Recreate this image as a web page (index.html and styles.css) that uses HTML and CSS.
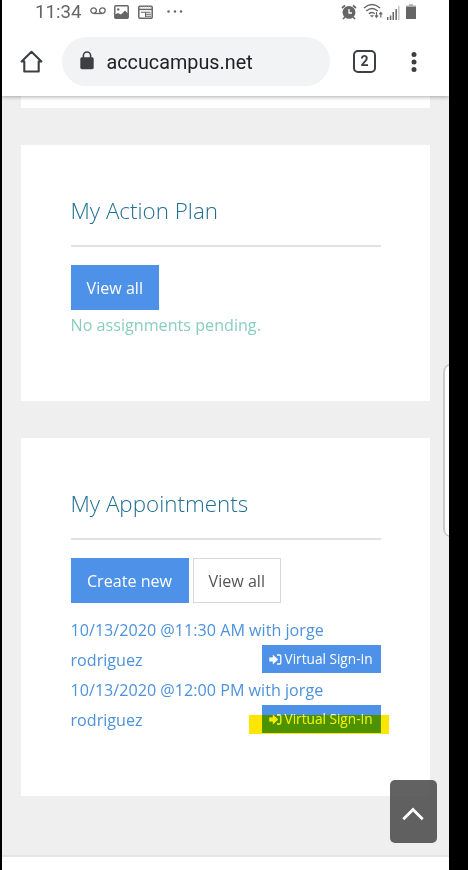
FILE: index.html
```html
<!DOCTYPE html>
<html lang="en">
<head>
<meta charset="utf-8">
<title>accucampus.net</title>
<link rel="stylesheet" href="styles.css">
</head>
<body>
<div class="phone">
  <header class="browser">
    <div class="status">
      <span class="clock">11:34</span>
      <svg class="voicemail" width="16" height="8" viewBox="0 0 16 8" fill="none" stroke="#666" stroke-width="1.3"><circle cx="3.6" cy="3.6" r="2.8"/><circle cx="12.4" cy="3.6" r="2.8"/><path d="M3.6 6.5h8.8"/></svg>
      <svg class="picture" width="15" height="14" viewBox="0 0 15 14"><rect x=".8" y=".8" width="13.4" height="12.4" rx="1" fill="#fff" stroke="#666" stroke-width="1.5"/><path d="M1 9.5l3-1.5 3 1.5 4-4 3 3V13H1z" fill="#666"/><circle cx="4.2" cy="4.4" r="1.2" fill="#666"/></svg>
      <svg class="news" width="15" height="14" viewBox="0 0 15 14" fill="none" stroke="#666"><rect x=".8" y="1.2" width="13.4" height="12" rx="1" stroke-width="1.5"/><path d="M1 4.4h13" stroke-width="1.4"/><path d="M2 2.2h11" stroke="#ccc" stroke-width="1" stroke-dasharray="1 1"/><path d="M3 7.3h9.5M8 9.3h5M8 11.2h5M7.5 7v5" stroke-width="1.1"/></svg>
      <svg class="more" width="16" height="3" viewBox="0 0 16 3" fill="#666"><circle cx="1.5" cy="1.5" r="1.2"/><circle cx="8" cy="1.5" r="1.2"/><circle cx="14" cy="1.5" r="1.2"/></svg>
      <svg class="alarm" width="16" height="16" viewBox="0 0 16 16"><circle cx="8" cy="8.4" r="6.4" fill="#666"/><path d="M1 4L4 1.3M15 4l-3-2.7M4 13l-2 2M12 13l2 2" stroke="#666" stroke-width="1.7"/><path d="M8 5v4h3" fill="none" stroke="#fff" stroke-width="1.3"/></svg>
      <svg class="wifi" width="20" height="16" viewBox="0 0 20 16" fill="none" stroke="#666" stroke-width="1.4"><path d="M1 5q8-7 16 0M3.3 8q5.7-5 11.4 0M5.8 10.7q3.2-2.6 6 0"/><path d="M7 12.3h4L9 14.5z" fill="#666" stroke="none"/><path d="M13.5 9v5M12 12.3l1.5 2 1.5-2M17.8 14.5v-5M16.3 11.3l1.5-2 1.5 2" stroke-width="1.1"/></svg>
      <svg class="signal" width="13" height="14" viewBox="0 0 13 14" fill="#666"><path d="M0 11h1.4v3H0zM2.8 9.5h1.5V14H2.8zM5.5 6H7v8H5.5zM8.4 3h1.5v11H8.4z"/><path d="M11.2 0h1.3v14h-1.3z" fill="#bbb"/></svg>
      <svg class="battery" width="10" height="15" viewBox="0 0 10 15"><path d="M3 0h4v2H3z" fill="#bbb"/><path d="M0 1.5h10V3H0z" fill="#aaa"/><path d="M0 3h10v12H0z" fill="#666"/></svg>
    </div>
    <div class="toolbar">
      <svg class="home" width="23" height="23" viewBox="0 0 23 23" fill="none" stroke="#3c4043" stroke-width="2.1" stroke-linejoin="round"><path d="M1.6 11.4L11.5 1.8l9.9 9.6h-2.7v10.1H4.3V11.4z"/></svg>
      <div class="address">
        <svg class="lock" width="14" height="19" viewBox="0 0 14 19"><rect x=".3" y="6.2" width="13.4" height="12" rx="1.6" fill="#3c4043"/><path d="M3.4 7V4.6a3.6 3.6 0 0 1 7.2 0V7" fill="none" stroke="#3c4043" stroke-width="1.6"/></svg>
        <span>accucampus.net</span>
      </div>
      <div class="tabs">2</div>
      <svg class="menu" width="6" height="20" viewBox="0 0 6 20" fill="#3c4043"><circle cx="3" cy="2.5" r="2.5"/><circle cx="3" cy="10" r="2.5"/><circle cx="3" cy="17.5" r="2.5"/></svg>
    </div>
  </header>
  <main class="page">
    <section class="card card-end"></section>
    <section class="card plan">
      <h2>My Action Plan</h2>
      <div class="actions"><a class="btn primary view">View all</a></div>
      <p class="empty">No assignments pending.</p>
    </section>
    <section class="card appointments">
      <h2>My Appointments</h2>
      <div class="actions"><a class="btn primary create">Create new</a><a class="btn view">View all</a></div>
      <ul class="list">
        <li><span class="when">10/13/2020 @11:30 AM with jorge</span><div class="row"><span>rodriguez</span><a class="sign"><svg width="13" height="11" viewBox="0 0 13 11"><path d="M.3 3.4h3.5V.4l5.4 5.1-5.4 5.1V7.6H.3z" fill="currentColor"/><path d="M8 1h2.5q1.3 0 1.3 1.3v6.4q0 1.3-1.3 1.3H8" fill="none" stroke="currentColor" stroke-width="1.3"/></svg><span>Virtual Sign-In</span></a></div></li>
        <li><span class="when">10/13/2020 @12:00 PM with jorge</span><div class="row"><span>rodriguez</span><a class="sign"><svg width="13" height="11" viewBox="0 0 13 11"><path d="M.3 3.4h3.5V.4l5.4 5.1-5.4 5.1V7.6H.3z" fill="currentColor"/><path d="M8 1h2.5q1.3 0 1.3 1.3v6.4q0 1.3-1.3 1.3H8" fill="none" stroke="currentColor" stroke-width="1.3"/></svg><span>Virtual Sign-In</span></a><i class="marker"></i></div></li>
      </ul>
    </section>
  </main>
  <div class="edge-panel"></div>
  <div class="to-top"><svg width="22" height="14" viewBox="0 0 22 14" fill="none" stroke="#fff" stroke-width="2.8"><path d="M1.3 12.3L11 2.6l9.7 9.7"/></svg></div>
</div>
</body>
</html>
```
FILE: styles.css
```css
* { box-sizing: border-box; }
body { margin: 0; background: #000; font-family: "Open Sans", sans-serif; overflow: hidden; }
.phone { position: relative; width: 447px; height: 870px; margin-left: 2px; background: #fff; overflow: hidden; }
.browser { position: relative; height: 96px; background: #fff; box-shadow: 0 1px 4px rgba(0,0,0,.32); z-index: 1; font-family: Roboto, sans-serif; }
.status { display: flex; align-items: center; height: 24px; padding: 0 33px 0 33px; color: #666; }
.clock { width: 47px; font-size: 18.7px; line-height: 24px; white-space: nowrap; }
.voicemail { margin: 0 0 2px 8px; }
.picture { margin: 0 0 1px 8px; }
.news { margin: 0 0 1px 9px; }
.more { margin: 0 0 1px 14px; }
.alarm { margin: 0 0 1px auto; }
.wifi { margin: 0 0 2px 6px; }
.signal { margin: 1px 0 0 4px; }
.battery { margin: 0 0 1px 6px; }
.toolbar { display: flex; align-items: center; height: 49px; margin-top: 13px; padding-left: 18px; }
.address { display: flex; align-items: center; width: 268px; height: 49px; margin-left: 19px; padding-left: 18px; border-radius: 25px; background: #f1f3f4; color: #202124; font-size: 19.8px; }
.address span { margin: 1px 0 0 12.5px; }
.lock { margin-top: -3px; }
.tabs { width: 23px; height: 23px; margin-left: 23px; border: 2px solid #3c4043; border-radius: 5px; color: #3c4043; font-size: 14px; font-weight: 700; line-height: 19px; text-align: center; }
.menu { margin-left: 35px; }
.page { height: 761px; padding: 0 19px 0 18.5px; background: #efefef; border-bottom: 2px solid #e5e5e5; }
.card { padding: 49px 49.5px 0 50px; background: #fff; }
.card-end { height: 12px; padding: 0; }
.plan { height: 256px; margin-top: 37px; }
.appointments { height: 358px; margin-top: 37px; }
h2 { height: 53px; margin: 0; border-bottom: 2px solid #e2e2e2; color: #1f6f92; font-size: 22.4px; font-weight: 300; line-height: 34px; white-space: nowrap; }
.actions { display: flex; gap: 4px; margin-top: 18px; }
.btn { display: flex; align-items: center; justify-content: center; height: 45px; border: 1px solid #d8d8d8; color: #555; font-size: 16.1px; }
.primary { border-color: #4d92e8; background: #4d92e8; color: #fff; }
.view { width: 88.5px; }
.create { width: 118px; }
.empty { margin: 0; color: #88cebe; font-size: 16.15px; line-height: 30px; white-space: nowrap; }
.list { margin: 12px 0 0; padding: 0; list-style: none; color: #4d92dc; font-size: 16.15px; line-height: 30px; }
.when { display: block; height: 30px; white-space: nowrap; }
.row { position: relative; display: flex; align-items: center; justify-content: space-between; height: 30px; }
.sign { display: flex; align-items: center; width: 118.5px; height: 28px; margin-top: -2px; padding-left: 7px; background: #4d92e8; color: #fff; font-size: 13.65px; line-height: 28px; white-space: nowrap; }
.sign span { margin-left: 2.5px; }
.marker { position: absolute; left: 178.5px; top: 10px; width: 140px; height: 19px; background: #ffe600; mix-blend-mode: darken; }
.edge-panel { position: absolute; left: 440.5px; top: 364px; width: 16px; height: 173px; border: 1px solid #bbb; border-left: 2px solid #ccc; border-radius: 9px; background: #fff; }
.to-top { position: absolute; left: 388px; top: 780px; display: flex; align-items: center; justify-content: center; width: 46.5px; height: 63px; padding-top: 4px; border-radius: 5px; background: rgba(70,70,70,.85); }
```
